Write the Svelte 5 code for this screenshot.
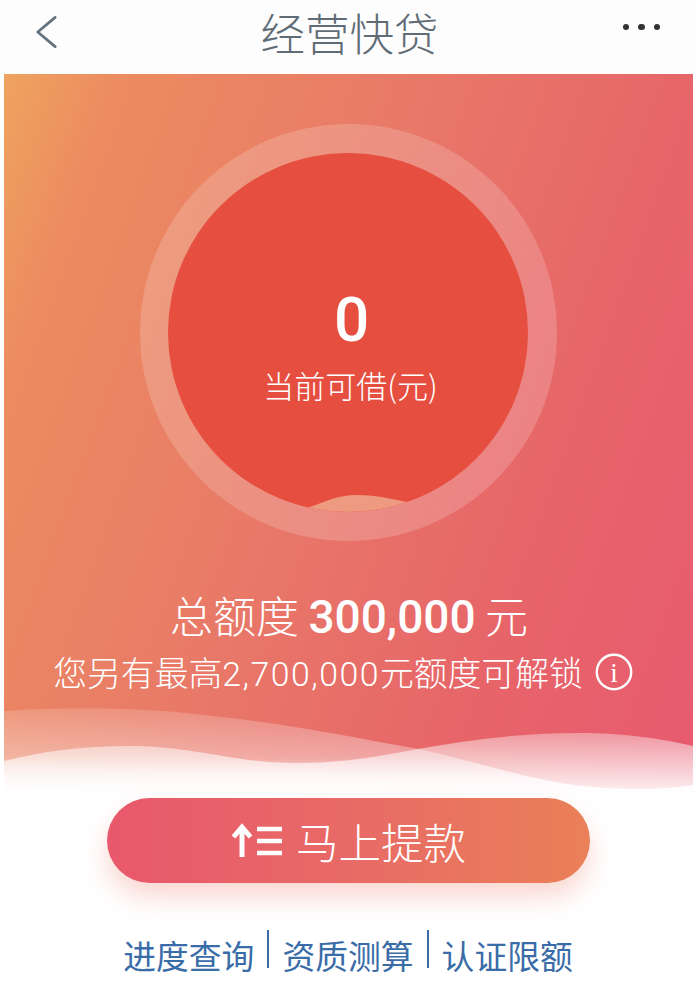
<script>
  const links = ['进度查询', '资质测算', '认证限额'];
</script>

<div class="page">
  <header class="bar">
    <svg class="back" viewBox="0 0 24 36" aria-hidden="true"><path d="M22 2 3 18l19 16" /></svg>
    <h1>经营快贷</h1>
    <div class="dots" aria-hidden="true"><i></i><i></i><i></i></div>
  </header>

  <section class="hero">
    <div class="ring">
      <div class="disc">
        <strong class="zero">0</strong>
        <span class="cap">当前可借(元)</span>
        <svg class="bump" viewBox="0 0 100 20" aria-hidden="true">
          <path d="M0 14C18 8 30 1 50 1c18 0 30 3 50 7v12H0z" />
        </svg>
      </div>
    </div>

    <p class="total">总额度 <b>300,000</b> 元</p>
    <p class="more">
      <span>您另有最高<em>2,700,000</em>元额度可解锁</span>
      <svg class="info" viewBox="0 0 38 38" aria-hidden="true">
        <circle cx="19" cy="19" r="17.2" />
        <text x="19" y="29" text-anchor="middle">i</text>
      </svg>
    </p>

    <svg class="waves" viewBox="0 0 689 97" preserveAspectRatio="none" aria-hidden="true">
      <defs>
        <linearGradient id="wa" x1="0" y1="0" x2="0" y2="1">
          <stop offset="0" stop-color="#fff" stop-opacity=".16" />
          <stop offset=".55" stop-color="#fff" stop-opacity=".4" />
          <stop offset=".8" stop-color="#fff" stop-opacity=".8" />
          <stop offset="1" stop-color="#fff" />
        </linearGradient>
        <linearGradient id="wb" x1="0" y1="0" x2="0" y2="1">
          <stop offset="0" stop-color="#fff" stop-opacity=".36" />
          <stop offset=".6" stop-color="#fff" stop-opacity=".72" />
          <stop offset="1" stop-color="#fff" stop-opacity=".95" />
        </linearGradient>
      </defs>
      <path fill="url(#wa)" d="M0 10C60 6 130 6 200 14c80 8 150 22 214 34 66 14 116 34 186 39 40 2 70 0 89-3v13H0z" />
      <path fill="url(#wb)" d="M0 60c40-10 80-15 125-15 65 0 105 17 165 17 50 0 80-6 124-14 56-10 106-16 161-16 45 0 85 6 114 13v52H0z" />
    </svg>
  </section>

  <button class="cta" type="button">
    <svg viewBox="0 0 52 36" aria-hidden="true">
      <path class="arrow" d="M11 34V4M2.500 14 11 4l8.500 10" />
      <path class="lines" d="M26 6h25M26 18h25M26 30h25" />
    </svg>
    <span>马上提款</span>
  </button>

  <nav class="links">
    {#each links as link, i}
      {#if i > 0}<span class="sep"></span>{/if}
      <span class="link">{link}</span>
    {/each}
  </nav>
</div>

<style>
  :global(body) {
    margin: 0;
    background: #fff;
  }

  .page {
    width: 696px;
    height: 990px;
    overflow: hidden;
    display: flex;
    flex-direction: column;
    background: #fff;
    font-family: "Noto Sans CJK SC", "Liberation Sans", sans-serif;
  }

  .bar {
    height: 74px;
    flex: none;
    display: grid;
    grid-template-columns: 1fr auto 1fr;
    align-items: center;
    padding: 0 36px 0 35px;
    box-sizing: border-box;
    background: #fdfdfe;
  }

  .back {
    width: 22px;
    height: 36px;
    margin-top: -10px;
    fill: none;
    stroke: #66727c;
    stroke-width: 3;
    stroke-linecap: round;
    stroke-linejoin: round;
  }

  h1 {
    margin: -10px 0 0 4px;
    font-size: 44.500px;
    line-height: 64px;
    font-weight: 300;
    color: #5f6c76;
  }

  .dots {
    justify-self: end;
    display: flex;
    gap: 9px;
    margin-top: -20px;
  }

  .dots i {
    width: 6.500px;
    height: 6.500px;
    border-radius: 50%;
    background: #333;
  }

  .hero {
    position: relative;
    flex: none;
    height: 724px;
    margin: 0 3px 0 4px;
    padding-top: 50px;
    box-sizing: border-box;
    display: flex;
    flex-direction: column;
    align-items: center;
    color: #fff;
    background: linear-gradient(110deg, #efa35f 0%, #ec8c60 12%, #e87868 45%, #e76469 75%, #e85a70 100%);
  }

  .ring {
    width: 417px;
    height: 417px;
    flex: none;
    box-sizing: border-box;
    border-radius: 50%;
    padding: 29px 29px 29px 28px;
    background: rgba(255, 255, 255, 0.18);
  }

  .disc {
    position: relative;
    height: 100%;
    border-radius: 50%;
    overflow: hidden;
    background: #e64e3f;
    display: flex;
    flex-direction: column;
    align-items: center;
    box-sizing: border-box;
    padding-top: 125px;
  }

  .zero {
    margin-left: 7px;
    font-family: Roboto, "Liberation Sans", sans-serif;
    font-size: 62px;
    line-height: 84px;
    font-weight: 500;
  }

  .cap {
    margin: 3px 0 0 5px;
    font-size: 31px;
    line-height: 40px;
    font-weight: 300;
  }

  .bump {
    position: absolute;
    left: 139px;
    bottom: -2px;
    width: 100px;
    height: 20px;
    fill: #ee9a80;
  }

  .total {
    margin: 45px 0 0 1px;
    font-size: 43px;
    line-height: 56px;
    font-weight: 300;
    white-space: pre;
  }

  .total b {
    font-family: Roboto, "Liberation Sans", sans-serif;
    font-size: 46px;
    font-weight: 500;
  }

  .more {
    margin: -3px 0 0 -11px;
    display: flex;
    align-items: center;
    gap: 12px;
    font-size: 33.800px;
    line-height: 60px;
    font-weight: 300;
  }

  .more em {
    font-style: normal;
    font-family: Roboto, "Liberation Sans", sans-serif;
    letter-spacing: 1.500px;
  }

  .info {
    width: 38px;
    height: 38px;
    margin-top: -4px;
    fill: none;
    stroke: #fff;
    stroke-width: 2.400;
  }

  .info text {
    fill: #fff;
    stroke: none;
    font-family: "Liberation Serif", serif;
    font-size: 27px;
  }

  .waves {
    position: absolute;
    left: 0;
    right: 0;
    bottom: 0;
    width: 100%;
    height: 97px;
  }

  .cta {
    position: relative;
    flex: none;
    align-self: flex-start;
    margin: 0 0 0 107px;
    width: 483px;
    height: 85px;
    border: 0;
    border-radius: 43px;
    padding: 0;
    display: flex;
    align-items: center;
    justify-content: center;
    gap: 13px;
    color: #fff;
    font-family: inherit;
    font-size: 42.500px;
    font-weight: 300;
    background: linear-gradient(90deg, #e8586c 0%, #e86a66 50%, #ea8058 100%);
    box-shadow: 0 14px 26px rgba(232, 110, 90, 0.28);
  }

  .cta svg {
    width: 52px;
    height: 36px;
    fill: none;
    stroke: #fff;
  }

  .arrow {
    stroke-width: 5;
  }

  .lines {
    stroke-width: 4.500;
  }

  .links {
    display: flex;
    justify-content: center;
    align-items: flex-start;
    margin-top: 47px;
    color: #3a6ca8;
    font-size: 32.800px;
    line-height: 48px;
    font-weight: 400;
  }

  .link {
    margin-top: 1px;
  }

  .sep {
    width: 2px;
    height: 38px;
    margin: 0 13px;
    background: #3a6ca8;
  }
</style>
